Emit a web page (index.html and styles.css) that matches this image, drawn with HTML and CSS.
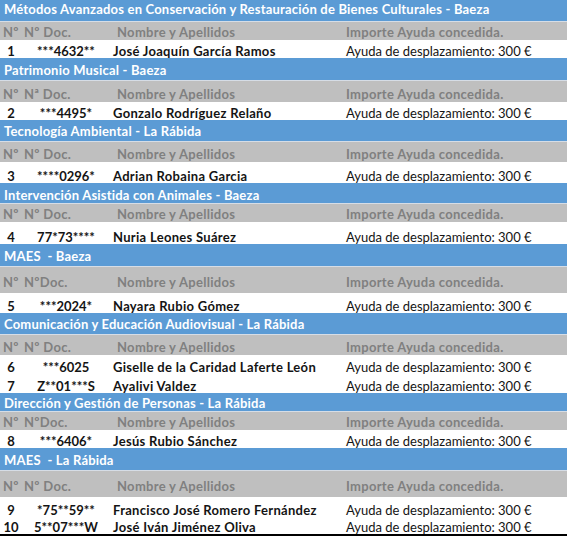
FILE: index.html
```html
<!DOCTYPE html>
<html lang="es">
<head>
<meta charset="utf-8">
<title>Ayudas de desplazamiento</title>
<link rel="stylesheet" href="styles.css">
</head>
<body>
<table class="grid">
  <colgroup>
    <col class="c-num">
    <col class="c-doc">
    <col class="c-name">
    <col class="c-amount">
  </colgroup>
  <tbody>
    <tr class="title first h21"><td colspan="4">Métodos Avanzados en Conservación y Restauración de Bienes Culturales - Baeza</td></tr>
    <tr class="head h19"><td>Nº</td><td>Nº Doc.</td><td class="hn">Nombre y Apellidos</td><td>Importe Ayuda concedida.</td></tr>
    <tr class="data h18"><td class="n">1</td><td class="d">***4632**</td><td class="nm">José Joaquín García Ramos</td><td class="amt">Ayuda de desplazamiento: 300 €</td></tr>

    <tr class="title h22"><td colspan="4">Patrimonio Musical - Baeza</td></tr>
    <tr class="head h22"><td>Nº</td><td>Nª Doc.</td><td class="hn">Nombre y Apellidos</td><td>Importe Ayuda concedida.</td></tr>
    <tr class="data h18"><td class="n">2</td><td class="d">***4495*</td><td class="nm">Gonzalo Rodríguez Relaño</td><td class="amt">Ayuda de desplazamiento: 300 €</td></tr>

    <tr class="title h21"><td colspan="4">Tecnología Ambiental - La Rábida</td></tr>
    <tr class="head h21"><td>Nº</td><td>Nº Doc.</td><td class="hn">Nombre y Apellidos</td><td>Importe Ayuda concedida.</td></tr>
    <tr class="data h21"><td class="n">3</td><td class="d">****0296*</td><td class="nm">Adrian Robaina Garcia</td><td class="amt">Ayuda de desplazamiento: 300 €</td></tr>

    <tr class="title low h20"><td colspan="4">Intervención Asistida con Animales - Baeza</td></tr>
    <tr class="head h19"><td>Nº</td><td>Nº Doc.</td><td class="hn">Nombre y Apellidos</td><td>Importe Ayuda concedida.</td></tr>
    <tr class="data h22"><td class="n">4</td><td class="d">77*73****</td><td class="nm">Nuria Leones Suárez</td><td class="amt">Ayuda de desplazamiento: 300 €</td></tr>

    <tr class="title h22"><td colspan="4">MAES  - Baeza</td></tr>
    <tr class="head tall h27"><td>Nº</td><td>NºDoc.</td><td class="hn">Nombre y Apellidos</td><td>Importe Ayuda concedida.</td></tr>
    <tr class="data h20"><td class="n">5</td><td class="d">***2024*</td><td class="nm">Nayara Rubio Gómez</td><td class="amt">Ayuda de desplazamiento: 300 €</td></tr>

    <tr class="title h21"><td colspan="4">Comunicación y Educación Audiovisual - La Rábida</td></tr>
    <tr class="head h21"><td>Nº</td><td>Nº Doc.</td><td class="hn">Nombre y Apellidos</td><td>Importe Ayuda concedida.</td></tr>
    <tr class="data h19"><td class="n">6</td><td class="d">***6025</td><td class="nm">Giselle de la Caridad Laferte León</td><td class="amt">Ayuda de desplazamiento: 300 €</td></tr>
    <tr class="data h19"><td class="n">7</td><td class="d">Z**01***S</td><td class="nm">Ayalivi Valdez</td><td class="amt">Ayuda de desplazamiento: 300 €</td></tr>

    <tr class="title low h18"><td colspan="4">Dirección y Gestión de Personas - La Rábida</td></tr>
    <tr class="head h19"><td>Nº</td><td>NºDoc.</td><td class="hn">Nombre y Apellidos</td><td>Importe Ayuda concedida.</td></tr>
    <tr class="data h18"><td class="n">8</td><td class="d">***6406*</td><td class="nm">Jesús Rubio Sánchez</td><td class="amt">Ayuda de desplazamiento: 300 €</td></tr>

    <tr class="title h22"><td colspan="4">MAES  - La Rábida</td></tr>
    <tr class="head tall h27"><td>Nº</td><td>Nº Doc.</td><td class="hn">Nombre y Apellidos</td><td>Importe Ayuda concedida.</td></tr>
    <tr class="data h20"><td class="n">9</td><td class="d">*75**59**</td><td class="nm">Francisco José Romero Fernández</td><td class="amt">Ayuda de desplazamiento: 300 €</td></tr>
    <tr class="data h18 last"><td class="n">10</td><td class="d">5**07***W</td><td class="nm">José Iván Jiménez Oliva</td><td class="amt">Ayuda de desplazamiento: 300 €</td></tr>
  </tbody>
</table>
</body>
</html>
```

FILE: styles.css
```css
html, body {
  margin: 0;
  padding: 0;
  background: #ffffff;
}

body {
  font-family: "Lato", "Open Sans", "DejaVu Sans", sans-serif;
  font-size: 13px;
  color: #141414;
}

.grid {
  width: 567px;
  border-collapse: collapse;
  table-layout: fixed;
  border-spacing: 0;
}

.c-num { width: 22px; }
.c-doc { width: 88px; }
.c-name { width: 232px; }
.c-amount { width: 225px; }

.grid td {
  padding: 0;
  white-space: pre;
  overflow: hidden;
  vertical-align: bottom;
  line-height: 13px;
}

.grid tr.h18 { height: 18px; }
.grid tr.h19 { height: 19px; }
.grid tr.h20 { height: 20px; }
.grid tr.h21 { height: 21px; }
.grid tr.h22 { height: 22px; }
.grid tr.h27 { height: 27px; }

.title td {
  background: #5b9bd5;
  color: #ffffff;
  font-weight: 700;
  letter-spacing: 0.2px;
  padding: 0 0 3px 4px;
}

.title.first td { padding-bottom: 5px; }
.title.low td { padding-bottom: 1px; }

.head td {
  background: #bfbfbf;
  color: #808080;
  font-weight: 700;
  letter-spacing: 0.3px;
  padding-bottom: 1px;
  box-shadow: inset 0 1px 0 #d6dde6;
}

.head.tall td { padding-bottom: 4px; }

.head td:first-child { padding-left: 3px; }
.head td:nth-child(2) { padding-left: 2px; }
.head td.hn { padding-left: 7px; }
.head td:nth-child(4) { padding-left: 4px; }

.data td {
  background: #ffffff;
  padding-bottom: 0;
}

.data td.n {
  font-weight: 700;
  text-align: center;
}

.data td.d {
  font-weight: 700;
  text-align: center;
}

.data td.nm {
  font-weight: 700;
  letter-spacing: 0.3px;
  padding-left: 3px;
}

.data td.amt {
  padding-left: 4px;
  font-weight: 400;
}

.last td { border-bottom: 2px solid #000000; }
```
